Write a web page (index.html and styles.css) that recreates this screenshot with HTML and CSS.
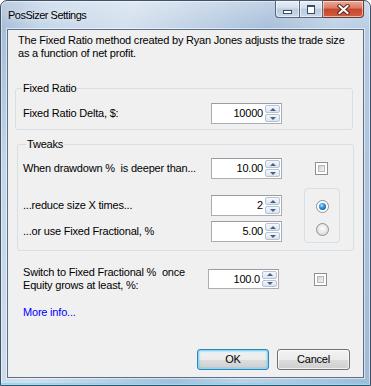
FILE: index.html
```html
<!DOCTYPE html>
<html lang="en">
<head>
    <meta charset="UTF-8">
    <title>PosSizer Settings</title>
    <link rel="stylesheet" href="styles.css">
</head>
<body>
    <div class="window">
        <div class="titlebar">
            <span class="title">PosSizer Settings</span>
            <div class="caption">
                <span class="cap-btn cap-min"><span class="glyph-min"></span></span>
                <span class="cap-btn cap-max"><span class="glyph-max"></span></span>
                <span class="cap-btn cap-close">
                    <svg width="13" height="11" viewBox="0 0 13 11">
                        <path d="M2.5 2 L10.5 9 M10.5 2 L2.5 9" stroke="#5b2a20" stroke-width="4" stroke-linecap="square" fill="none"/>
                        <path d="M2.5 2 L10.5 9 M10.5 2 L2.5 9" stroke="#ffffff" stroke-width="2" stroke-linecap="square" fill="none"/>
                    </svg>
                </span>
            </div>
        </div>

        <div class="client">
            <p class="intro">The Fixed Ratio method created by Ryan Jones adjusts the trade size as a function of net profit.</p>

            <fieldset class="group group-ratio">
                <legend>Fixed Ratio</legend>
                <div class="row">
                    <span class="label">Fixed Ratio Delta, $:</span>
                    <div class="spin">
                        <span class="spin-value">10000</span>
                        <span class="spin-btns"><span class="spin-up"></span><span class="spin-down"></span></span>
                    </div>
                </div>
            </fieldset>

            <fieldset class="group group-tweaks">
                <legend>Tweaks</legend>
                <div class="row row-first">
                    <span class="label">When drawdown % &nbsp;is deeper than...</span>
                    <div class="spin">
                        <span class="spin-value">10.00</span>
                        <span class="spin-btns"><span class="spin-up"></span><span class="spin-down"></span></span>
                    </div>
                    <span class="check check-tweak"></span>
                </div>
                <div class="pair">
                    <div class="pair-rows">
                        <div class="row">
                            <span class="label">...reduce size X times...</span>
                            <div class="spin">
                                <span class="spin-value">2</span>
                                <span class="spin-btns"><span class="spin-up"></span><span class="spin-down"></span></span>
                            </div>
                        </div>
                        <div class="row">
                            <span class="label">...or use Fixed Fractional, %</span>
                            <div class="spin">
                                <span class="spin-value">5.00</span>
                                <span class="spin-btns"><span class="spin-up"></span><span class="spin-down"></span></span>
                            </div>
                        </div>
                    </div>
                    <div class="radio-panel">
                        <span class="radio checked"></span>
                        <span class="radio"></span>
                    </div>
                </div>
            </fieldset>

            <div class="switch-row">
                <span class="label switch-label">Switch to Fixed Fractional % &nbsp;once<br>Equity grows at least, %:</span>
                <div class="spin spin-small">
                    <span class="spin-value">100.0</span>
                    <span class="spin-btns"><span class="spin-up"></span><span class="spin-down"></span></span>
                </div>
                <span class="check check-switch"></span>
            </div>

            <a class="more-link" href="#">More info...</a>

            <div class="actions">
                <button class="btn btn-default">OK</button>
                <button class="btn btn-cancel">Cancel</button>
            </div>
        </div>
    </div>
</body>
</html>
```

FILE: styles.css
```css
html, body {
    margin: 0;
    padding: 0;
    background-color: #fff;
    overflow: hidden;
}
.window {
    width: 371px;
    height: 386px;
    box-sizing: border-box;
    display: flex;
    flex-direction: column;
    border: 1px solid #3f5168;
    border-radius: 7px 7px 0 0;
    background:
        linear-gradient(180deg, rgba(255,255,255,0.3), rgba(255,255,255,0) 30px),
        linear-gradient(105deg, #9fb8d4 0%, #c3d5e8 10%, #d2dfed 28%, #b8cce2 46%, #a6bed9 58%, #bed1e6 72%, #a1bad7 100%);
    box-shadow: inset 0 -2px 0 rgba(120,215,245,0.7), inset 0 0 0 1px rgba(255,255,255,0.5);
    font-family: "Liberation Sans", Arial, sans-serif;
    font-size: 11px;
    line-height: 13px;
    letter-spacing: -0.2px;
    color: #000;
}

/* title bar */
.titlebar {
    height: 28px;
    display: flex;
    align-items: flex-start;
    padding-left: 7px;
}
.title {
    margin-top: 8px;
    letter-spacing: -0.5px;
    text-shadow: 0 0 6px rgba(255,255,255,0.9);
}
.caption {
    display: flex;
    margin: -1px 6px 0 auto;
}
.cap-btn {
    height: 18px;
    box-sizing: border-box;
    display: flex;
    align-items: center;
    justify-content: center;
    border: 1px solid #56677d;
    background: linear-gradient(#e8eff8 0%, #d2deeb 45%, #b9cbdf 50%, #cbd9e9 100%);
    box-shadow: inset 0 0 0 1px rgba(255,255,255,0.55);
}
.cap-min {
    width: 24px;
    border-right: none;
    border-radius: 0 0 0 4px;
    align-items: flex-end;
    padding-bottom: 3px;
}
.cap-max {
    width: 24px;
}
.cap-close {
    width: 41px;
    border-left: none;
    border-radius: 0 0 4px 0;
    border-color: #6a3a33;
    background: linear-gradient(#eaa996 0%, #dc7a62 45%, #c8442b 50%, #d35d40 100%);
}
.glyph-min {
    width: 9px;
    height: 4px;
    box-sizing: border-box;
    border: 1px solid #3a4c63;
    background-color: #fff;
}
.glyph-max {
    width: 8px;
    height: 9px;
    box-sizing: border-box;
    border: 1px solid #3a4c63;
    border-top-width: 2px;
    background-color: #fff;
}

/* client area */
.client {
    flex: 1;
    display: flex;
    flex-direction: column;
    margin: 0 6px 7px 6px;
    border: 1px solid #5d6f84;
    background-color: #f0f0f0;
    box-shadow: 0 0 0 1px rgba(255,255,255,0.55);
}
.intro {
    margin: 4px 0 0 10px;
    width: 335px;
}

.group {
    box-sizing: border-box;
    min-inline-size: 0;
    border: 1px solid #d5dfe5;
    border-radius: 3px;
}
.group legend {
    padding: 0 1px;
}
.group-ratio {
    width: 338px;
    margin: 22px 0 0 7px;
    padding: 8px 6px 5px 7px;
}
.group-ratio legend {
    margin-left: -1px;
}
.group-tweaks {
    width: 337px;
    margin: 8px 0 0 9px;
    padding: 7px 5px 8px 5px;
}
.group-tweaks legend {
    margin-left: 3px;
}

.row {
    display: flex;
    align-items: center;
    height: 21px;
}
.row-first {
    margin-bottom: 16px;
}
.label {
    width: 188px;
    flex: 0 0 auto;
}

/* spin edit */
.spin {
    width: 71px;
    height: 21px;
    box-sizing: border-box;
    display: flex;
    border: 1px solid #abadb3;
    border-top-color: #9a9ca3;
    background-color: #fff;
}
.spin-value {
    flex: 1;
    text-align: right;
    line-height: 19px;
    padding-right: 2px;
}
.spin-btns {
    width: 15px;
    margin: 1px 1px 1px 0;
    display: flex;
    flex-direction: column;
    gap: 1px;
}
.spin-up, .spin-down {
    flex: 1;
    display: flex;
    align-items: center;
    justify-content: center;
    border: 1px solid #b5c3d3;
    border-radius: 2px;
    background: linear-gradient(#f5f8fc, #dbe4ef);
}
.spin-up::after, .spin-down::after {
    content: '';
    border-left: 3px solid transparent;
    border-right: 3px solid transparent;
}
.spin-up::after {
    border-bottom: 3px solid #4a5f86;
}
.spin-down::after {
    border-top: 3px solid #4a5f86;
}

/* checkbox and radios */
.check {
    width: 13px;
    height: 13px;
    box-sizing: border-box;
    padding: 2px;
    border: 1px solid #8e8f8f;
    background-color: #fff;
}
.check::after {
    content: '';
    display: block;
    height: 100%;
    box-sizing: border-box;
    border: 1px solid #b4b7bb;
    background: linear-gradient(135deg, #cdd0d4, #f7f7f7);
}
.check-tweak {
    margin-left: 33px;
}

.pair {
    display: flex;
    align-items: flex-start;
}
.pair-rows {
    display: flex;
    flex-direction: column;
    gap: 5px;
}
.radio-panel {
    width: 36px;
    height: 55px;
    box-sizing: border-box;
    margin: -7px 0 -1px 22px;
    padding-top: 11px;
    display: flex;
    flex-direction: column;
    align-items: center;
    gap: 10px;
    border: 1px solid #d5dfe5;
    border-radius: 4px;
}
.radio {
    width: 13px;
    height: 13px;
    box-sizing: border-box;
    border-radius: 50%;
    border: 1px solid #8e8f8f;
    background: radial-gradient(circle at 50% 40%, #fdfdfd 0%, #e6e6e6 55%, #cdcdcd 100%);
}
.radio.checked {
    padding: 2px;
    background: #fff;
}
.radio.checked::after {
    content: '';
    display: block;
    width: 7px;
    height: 7px;
    border-radius: 50%;
    background: radial-gradient(circle at 40% 35%, #b5e8ff 0%, #3a9be0 35%, #0f5a9a 80%, #0a3c6b 100%);
}

/* last settings row */
.switch-row {
    display: flex;
    align-items: center;
    margin: 15px 0 0 15px;
}
.switch-label {
    width: 185px;
}
.spin-small {
    height: 20px;
}
.spin-small .spin-value {
    line-height: 18px;
}
.check-switch {
    margin-left: 35px;
}

.more-link {
    align-self: flex-start;
    margin: 14px 0 0 15px;
    color: #0000ff;
    text-decoration: none;
}

/* dialog buttons */
.actions {
    margin-top: auto;
    display: flex;
    justify-content: flex-end;
    gap: 8px;
    padding: 0 13px 7px 0;
}
.btn {
    width: 72px;
    height: 21px;
    box-sizing: border-box;
    padding: 0;
    font: inherit;
    letter-spacing: inherit;
    line-height: 19px;
    color: #000;
    border: 1px solid #707070;
    border-radius: 3px;
    background: linear-gradient(#f2f2f2 0%, #ebebeb 50%, #dddddd 50%, #cfcfcf 100%);
    box-shadow: inset 0 0 0 1px rgba(255,255,255,0.7);
}
.btn-default {
    border-color: #3c7fb1;
    box-shadow: inset 0 0 0 1px #7fdcf8, inset 0 0 2px 1px #4fcaf0;
}
.btn-cancel {
    width: 73px;
}
```
